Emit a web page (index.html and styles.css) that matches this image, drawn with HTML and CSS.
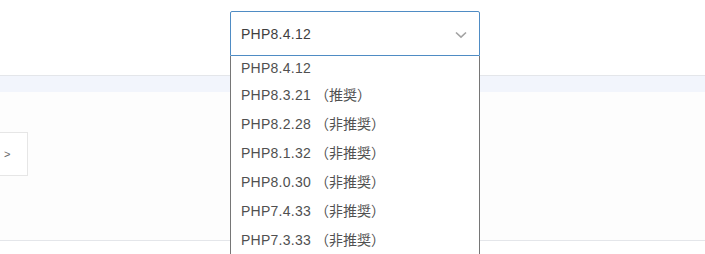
FILE: index.html
```html
<!DOCTYPE html>
<html lang="ja">
<head>
<meta charset="utf-8">
<title>PHPバージョン選択</title>
<link rel="stylesheet" href="styles.css">
</head>
<body>
<div class="page">
  <header class="top">
    <div class="select-wrap">
      <div class="select">
        <span class="select-value">PHP8.4.12</span>
        <svg class="chevron" width="12" height="8" viewBox="0 0 12 8" aria-hidden="true">
          <path d="M1 1.5 L6 6.2 L11 1.5" fill="none" stroke="#a3a3a3" stroke-width="1.6"/>
        </svg>
      </div>
      <ul class="options">
        <li class="option first">PHP8.4.12</li>
        <li class="option">PHP8.3.21 <span class="note">（推奨）</span></li>
        <li class="option">PHP8.2.28 <span class="note">（非推奨）</span></li>
        <li class="option">PHP8.1.32 <span class="note">（非推奨）</span></li>
        <li class="option">PHP8.0.30 <span class="note">（非推奨）</span></li>
        <li class="option">PHP7.4.33 <span class="note">（非推奨）</span></li>
        <li class="option">PHP7.3.33 <span class="note">（非推奨）</span></li>
      </ul>
    </div>
  </header>
  <div class="band"></div>
  <main class="content">
    <div class="pager-btn">&gt;</div>
  </main>
  <footer class="bottom"></footer>
</div>
</body>
</html>
```

FILE: styles.css
```css
html, body {
  margin: 0;
  padding: 0;
  background: #ffffff;
}
body {
  font-family: "Liberation Sans", Arial, "Noto Sans CJK JP", sans-serif;
  font-size: 14px;
  color: #444;
  overflow: hidden;
  height: 254px;
}
.page {
  width: 705px;
  height: 254px;
  overflow: hidden;
}
.top {
  height: 76px;
  box-sizing: border-box;
  padding: 11px 0 0 230px;
  border-bottom: 1px solid #e4e6ea;
  position: relative;
  z-index: 2;
}
.select-wrap {
  position: relative;
  width: 250px;
}
.select {
  box-sizing: border-box;
  height: 45px;
  border: 1px solid #4f8cc4;
  border-radius: 2px 2px 0 0;
  background: #fff;
  display: flex;
  align-items: center;
  justify-content: space-between;
  padding: 0 12px 0 10px;
}
.select-value {
  color: #3f3f3f;
  line-height: 16px;
  letter-spacing: 0.25px;
}
.chevron {
  display: block;
  margin-top: 2px;
}
.options {
  position: absolute;
  top: 45px;
  left: 0;
  width: 250px;
  box-sizing: border-box;
  height: 210px;
  margin: 0;
  padding: 0;
  list-style: none;
  background: #fff;
  border-left: 1px solid #767676;
  border-right: 1px solid #767676;
  overflow: hidden;
}
.option {
  height: 29px;
  line-height: 29px;
  padding-left: 10px;
  color: #505050;
  white-space: nowrap;
  letter-spacing: 0.25px;
}
.option.first {
  height: 24px;
  line-height: 24px;
}
.note {
  font-family: "Noto Sans CJK JP", sans-serif;
  letter-spacing: 0;
}
.band {
  height: 16px;
  background: #f2f5fc;
}
.content {
  height: 148px;
  box-sizing: border-box;
  padding-top: 40px;
  background: #fdfdfd;
}
.pager-btn {
  box-sizing: border-box;
  width: 29px;
  height: 44px;
  margin-left: -1px;
  border: 1px solid #e6e6e6;
  background: #fff;
  color: #666;
  font-size: 11px;
  line-height: 42px;
  padding-left: 4px;
}
.bottom {
  height: 13px;
  border-top: 1px solid #e4e6ea;
  background: #fff;
}
```
